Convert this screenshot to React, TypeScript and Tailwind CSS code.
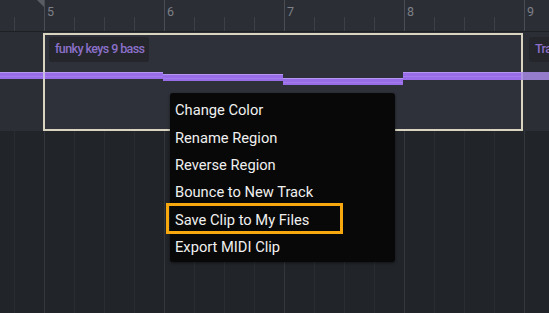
import React from "react";

const cells = Array.from({ length: 18 }, (_, i) => i); // cells start at x = 14 + 30k

function RulerCell({ k }: { k: number }) {
  const major = (k - 1) % 4 === 0;
  if (major) {
    return (
      <div className="w-[30px] h-full shrink-0 border-l border-[#4a4d54] relative">
        <span className="block pl-[2px] pt-[5px] text-[12.5px] leading-[13px] text-[#7d8087]">
          {5 + (k - 1) / 4}
        </span>
      </div>
    );
  }
  return (
    <div className="w-[30px] h-full shrink-0 flex flex-col">
      <div className="h-[17px]" />
      <div className="flex-1 border-l border-[#3d4047]" />
    </div>
  );
}

function Chip({ children, w }: { children: React.ReactNode; w: string }) {
  return (
    <div
      className={`${w} h-[25px] shrink-0 rounded-[3px] bg-[#24262c] flex items-center pl-[6px] text-[12.5px] font-medium tracking-[-0.6px] text-[#8c70c9] whitespace-nowrap overflow-hidden`}
    >
      {children}
    </div>
  );
}

const items = [
  "Change Color",
  "Rename Region",
  "Reverse Region",
  "Bounce to New Track",
  "Save Clip to My Files",
  "Export MIDI Clip",
];

export default function App() {
  return (
    <div
      className="relative w-[549px] h-[313px] overflow-hidden bg-[#212429] flex flex-col"
      style={{ fontFamily: "Roboto, 'Liberation Sans', sans-serif" }}
    >
      {/* Ruler */}
      <div className="relative h-[31px] shrink-0 bg-[#2b2e35] flex">
        <div className="w-[14px] shrink-0" />
        {cells.map((k) =>
          k === 0 ? (
            <div key={k} className="w-[30px] h-full shrink-0 flex flex-col">
              <div className="h-[17px]" />
              <div className="flex-1 border-l border-[#3d4047]" />
            </div>
          ) : (
            <RulerCell key={k} k={k} />
          )
        )}
        <svg className="absolute left-[37px] top-0" width="8" height="8" viewBox="0 0 8 8">
          <polygon points="0,0 7,0 7,7" fill="#595c62" />
        </svg>
      </div>
      <div className="h-px shrink-0 bg-[#1e2024]" />

      {/* Track */}
      <div className="relative h-[99px] shrink-0 bg-[#2b2e35] flex items-start">
        <div className="ml-[43px] mt-px w-[480px] h-[98px] shrink-0 border-2 border-[#d9d4bf] bg-[#2e3139] pt-[2px] pl-[4px]">
          <Chip w="w-[100px]">funky keys 9 bass</Chip>
        </div>
        <div className="ml-[6px] mt-[5px]">
          <Chip w="w-[40px]">Tra</Chip>
        </div>
        <svg className="absolute left-0 top-0 pointer-events-none" width="549" height="99">
          <g>
            <rect x="0" y="40" width="163" height="7" fill="#9a6de8" />
            <rect x="0" y="40" width="163" height="1" fill="#b496f2" />
            <rect x="0" y="44" width="163" height="1" fill="#a27cee" />
            <rect x="163" y="42" width="120" height="7" fill="#9a6de8" />
            <rect x="163" y="42" width="120" height="1" fill="#b496f2" />
            <rect x="163" y="46" width="120" height="1" fill="#a27cee" />
            <rect x="283" y="46" width="120" height="7" fill="#9a6de8" />
            <rect x="283" y="46" width="120" height="1" fill="#b496f2" />
            <rect x="283" y="50" width="120" height="1" fill="#a27cee" />
            <rect x="403" y="40" width="118" height="8" fill="#9a6de8" />
            <rect x="403" y="40" width="118" height="1" fill="#b496f2" />
            <rect x="403" y="44" width="118" height="1" fill="#a27cee" />
            <rect x="521" y="40" width="28" height="8" fill="#a88be6" opacity="0.85" />
            <rect x="43" y="40" width="2" height="7" fill="#c9b9e6" />
          </g>
        </svg>
      </div>

      {/* Lower lanes */}
      <div className="flex-1 flex">
        <div className="w-[14px] shrink-0" />
        {cells.map((k) => (
          <div
            key={k}
            className={`w-[30px] h-full shrink-0 border-l ${
              (k - 1) % 4 === 0 ? "border-[#33363c]" : "border-[#2a2d32]"
            }`}
          />
        ))}
      </div>

      {/* Context menu */}
      <div className="absolute left-[170px] top-[93px] w-[225px] h-[169px] rounded-[3px] bg-[#080808] pt-[3.5px] shadow-[0_1px_3px_rgba(0,0,0,0.5)]">
        {items.map((t) => (
          <div
            key={t}
            className="h-[27.4px] pl-[5px] flex items-center text-[14.7px] text-[#f0f0f0] whitespace-nowrap"
          >
            {t}
          </div>
        ))}
      </div>

      {/* Highlight annotation */}
      <div className="absolute left-[166px] top-[203px] w-[177px] h-[31px] border-[3px] border-[#f7a80f]" />
    </div>
  );
}
